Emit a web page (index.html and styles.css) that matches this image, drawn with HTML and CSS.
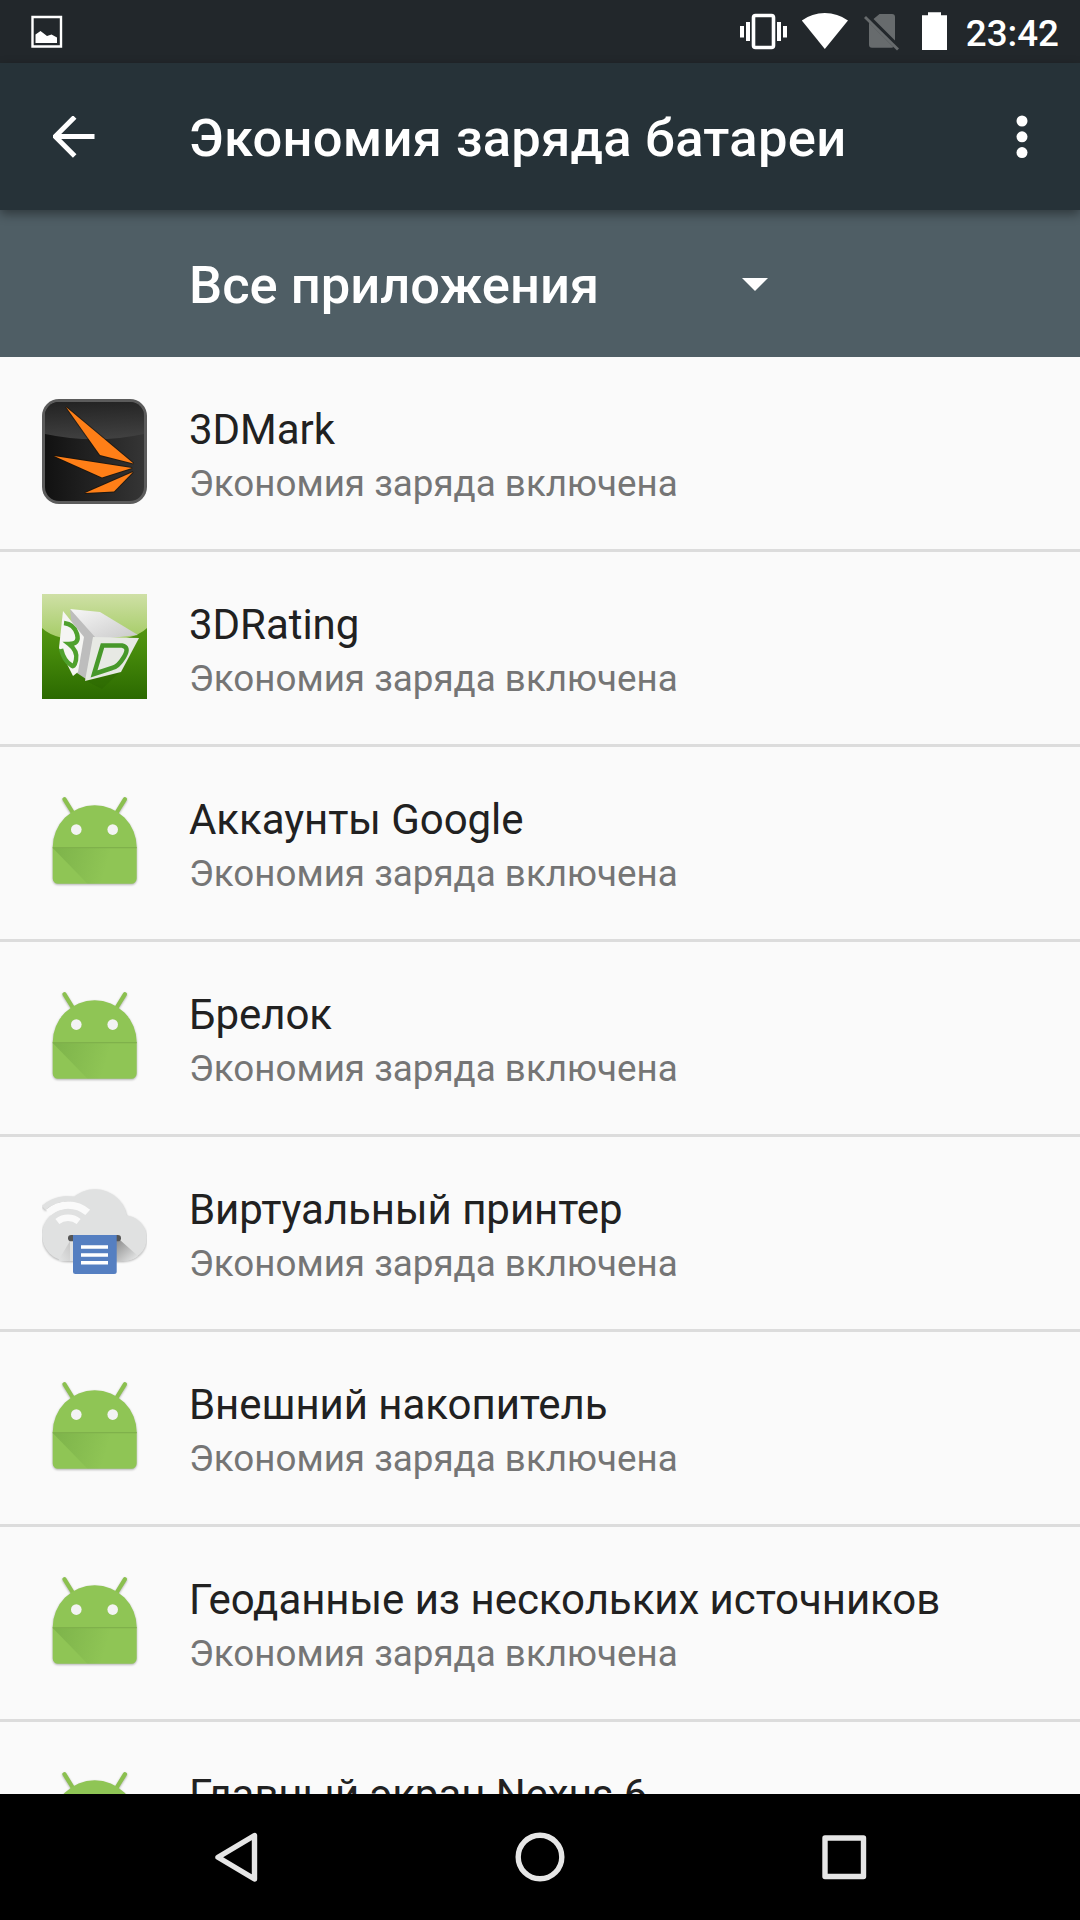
FILE: index.html
```html
<!DOCTYPE html>
<html lang="ru">
<head>
<meta charset="utf-8">
<title>Экономия заряда батареи</title>
<link rel="stylesheet" href="styles.css">
</head>
<body>
<svg class="defs" aria-hidden="true">
  <defs>
    <linearGradient id="fold" gradientUnits="userSpaceOnUse" x1="10" y1="60" x2="65" y2="76">
      <stop offset="0" stop-color="#33691e" stop-opacity=".2"/>
      <stop offset="1" stop-color="#33691e" stop-opacity="0"/>
    </linearGradient>
    <symbol id="android" viewBox="0 0 105 105">
      <g class="lift">
        <path d="M22.4 10.2 31 24M83 10.2 74.4 24" fill="none" stroke="#8bc04f" stroke-width="4.2" stroke-linecap="round"/>
        <path d="M10.7 58.3a42 42 0 0 1 84 0V89.500a5.200 5.200 0 0 1-5.200 5.200h-73.600a5.200 5.200 0 0 1-5.200-5.200z" fill="#8fc555"/>
      </g>
      <path d="M10.700 59H94.700V89.500a5.200 5.200 0 0 1-5.200 5.200H45.500z" fill="url(#fold)"/>
      <path d="M10.700 58.600h84" stroke="#7fb14b" stroke-width="1.200"/>
      <circle cx="34.300" cy="40.600" r="5.300" fill="#f3f3f3"/>
      <circle cx="70.700" cy="40.600" r="5.300" fill="#f3f3f3"/>
    </symbol>
  </defs>
</svg>

<div class="screen">
  <header class="status">
    <svg class="picture" width="32" height="34" viewBox="0 0 32 34"><path d="M1.500 2h28.500v29.500H1.500z" fill="none" stroke="#fff" stroke-width="2.400"/><path d="M4.500 28V19.500L9.500 16 16 21 20.500 19.500 26 22.500V28z" fill="#fff"/></svg>
    <svg width="244" height="63" viewBox="720 0 244 63" class="indicators">
      <g fill="#fff">
        <path d="M740 26h4v11.500h-4zM746 22h4v19h-4zM777 22h4v19h-4zM783 26h4v11.500h-4z"/>
        <rect x="753.500" y="15.500" width="20" height="32" rx="2" fill="none" stroke="#fff" stroke-width="3.600"/>
        <path d="M824.800 49 801.800 20.500Q812 13 824.800 13T848 20.500z"/>
        <path d="M928 12.300h13v3h6V50h-25V15.300h6z"/>
      </g>
      <path d="M879.500 14H892a3 3 0 0 1 3 3V40.500L873.500 19zM869 22.500 893.500 47q-.7.800-2 .800H872a3 3 0 0 1-3-3z" fill="#676b6d"/>
      <path d="M865 17 898 49.500" stroke="#676b6d" stroke-width="2.800"/>
    </svg>
    <span class="clock">23:42</span>
  </header>

  <div class="appbar">
    <svg class="back" width="42" height="42" viewBox="0 0 42 42"><path d="M41.500 20.500H3.500M21.700 1 2.200 20.500l19.500 19.500" fill="none" stroke="#fff" stroke-width="5"/></svg>
    <h1 class="heading heading-title">Экономия заряда батареи</h1>
    <svg class="more" width="12" height="44" viewBox="0 0 12 44" fill="#fff"><circle cx="6" cy="6" r="5.500"/><circle cx="6" cy="21.800" r="5.500"/><circle cx="6" cy="37.600" r="5.500"/></svg>
  </div>

  <div class="filter">
    <span class="heading">Все приложения</span>
    <svg class="caret" width="26" height="14" viewBox="0 0 26 14"><path d="M0 1h26L13 14z" fill="#fff"/></svg>
  </div>

  <ul class="apps">
    <li class="app">
      <svg class="icon" viewBox="0 0 105 105">
        <defs>
          <linearGradient id="mk" x2="1"><stop stop-color="#111"/><stop offset="1" stop-color="#353535"/></linearGradient>
          <linearGradient id="gl" x2="0" y2="1"><stop stop-color="#242424"/><stop offset="1" stop-color="#444"/></linearGradient>
        </defs>
        <rect width="105" height="105" rx="17" fill="#5b5b5b"/>
        <rect x="3" y="3" width="99" height="99" rx="14" fill="url(#mk)"/>
        <path d="M3 35V17A14 14 0 0 1 17 3H88a14 14 0 0 1 14 14V35Q53 45.500 3 35z" fill="url(#gl)" opacity=".9"/>
        <g fill="#ff7f17" stroke="#1a1005" stroke-opacity=".6" stroke-width="2" paint-order="stroke">
          <path d="M24 8 91.500 64.500 58 56z"/><path d="M12 57 90 69 60 78.500z"/><path d="M91 73 72 92.500 43 94z"/>
        </g>
      </svg>
      <div class="text"><span class="name">3DMark</span><span class="state">Экономия заряда включена</span></div>
    </li>
    <li class="app">
      <svg class="icon" viewBox="0 0 105 105">
        <defs>
          <linearGradient id="gr" x2="0" y2="1"><stop stop-color="#69a51c"/><stop offset=".55" stop-color="#468a0b"/><stop offset="1" stop-color="#2b6900"/></linearGradient>
          <linearGradient id="sh" x2="0" y2="1"><stop stop-color="#cfe0a6"/><stop offset="1" stop-color="#a3cb63"/></linearGradient>
          <linearGradient id="tp" x2="1" y2="1"><stop stop-color="#f7f7f7"/><stop offset="1" stop-color="#c8c8c8"/></linearGradient>
        </defs>
        <path d="M0 0h105v105H0z" fill="url(#gr)"/>
        <path d="M0 0h105v34Q92 47 52.500 47T0 34z" fill="url(#sh)"/>
        <path d="M31 80 44 87 80 76 60 95z" fill="#245b00" opacity=".25"/>
        <path d="M28 15 58 18 96 41 50 46z" fill="url(#tp)"/>
        <path d="M28 15 53 43 44 85 35 79z" fill="#bdbdbd"/>
        <path d="M21 17 42 43 36 78 31 82 17 54z" fill="#f5f5f3"/>
        <path d="M51 43 97 44 79 78 43 87z" fill="#e7e9e4"/>
        <path d="M22 29Q32 30 35 40T27 50Q36 57 34 66T29 71Q22 67 19 55" fill="none" stroke="#4fa12d" stroke-width="4.500"/>
        <path d="M60.500 51.500 80 51.500Q88 53 82 63T70 74L52 80z" fill="none" stroke="#47982a" stroke-width="4.500"/>
      </svg>
      <div class="text"><span class="name">3DRating</span><span class="state">Экономия заряда включена</span></div>
    </li>
    <li class="app"><svg class="icon"><use href="#android"/></svg><div class="text"><span class="name">Аккаунты Google</span><span class="state">Экономия заряда включена</span></div></li>
    <li class="app"><svg class="icon"><use href="#android"/></svg><div class="text"><span class="name">Брелок</span><span class="state">Экономия заряда включена</span></div></li>
    <li class="app">
      <svg class="icon" viewBox="0 0 105 105">
        <defs>
          <linearGradient id="pshade" gradientUnits="userSpaceOnUse" x1="74" y1="60" x2="92" y2="80"><stop stop-color="#888"/><stop offset="1" stop-color="#e0e1e1"/></linearGradient>
          <linearGradient id="lshade" gradientUnits="userSpaceOnUse" x1="32" y1="66" x2="16" y2="76"><stop stop-color="#c4c4c4"/><stop offset="1" stop-color="#e0e1e1"/></linearGradient>
        </defs>
        <g class="lift" fill="#e0e1e1">
          <circle cx="26" cy="56" r="26"/><circle cx="53" cy="42.700" r="32.500"/><circle cx="82" cy="59" r="22.800"/><path d="M26 50h56v31.900H26z"/>
          <path d="M1.700 29A36.300 36.300 0 0 1 45 25.500" fill="none" stroke="#e0e1e1" stroke-width="5.400"/>
        </g>
        <path d="M28 62V82H16z" fill="url(#lshade)"/>
        <path d="M78 61 96 77Q90 82 82 82H72V61z" fill="url(#pshade)"/>
        <g fill="none" stroke="#fafafa"><path d="M6.300 33.400A30 30 0 0 1 45.700 33.400" stroke-width="7.200"/><path d="M15.400 42.400A17.200 17.200 0 0 1 36.600 42.400" stroke-width="6.400"/></g>
        <rect x="26" y="56" width="53" height="6.300" rx="3.100" fill="#555"/>
        <path d="M31 56h43.700v36.500a2.500 2.500 0 0 1-2.500 2.500H33.500a2.500 2.500 0 0 1-2.500-2.500z" fill="#557fc1"/>
        <path d="M39 68h27M39 76h27M39 83.800h27" stroke="#fff" stroke-width="3.500"/>
      </svg>
      <div class="text"><span class="name">Виртуальный принтер</span><span class="state">Экономия заряда включена</span></div>
    </li>
    <li class="app"><svg class="icon"><use href="#android"/></svg><div class="text"><span class="name">Внешний накопитель</span><span class="state">Экономия заряда включена</span></div></li>
    <li class="app"><svg class="icon"><use href="#android"/></svg><div class="text"><span class="name">Геоданные из нескольких источников</span><span class="state">Экономия заряда включена</span></div></li>
    <li class="app"><svg class="icon"><use href="#android"/></svg><div class="text"><span class="name">Главный экран Nexus 6</span></div></li>
  </ul>

  <nav class="navbar">
    <svg width="1080" height="126" viewBox="0 0 1080 126" fill="none" stroke="#e6e6e6" stroke-width="5.400" stroke-linejoin="round">
      <path d="M254.500 41.500V85L218 63.200z"/>
      <circle cx="540" cy="63" r="21.800"/>
      <rect x="825" y="44" width="38.500" height="38.500"/>
    </svg>
  </nav>
</div>
</body>
</html>
```
FILE: styles.css
```css
* { box-sizing: border-box; }

body {
  margin: 0;
  font-family: Roboto, "Noto Sans", sans-serif;
  background: #fafafa;
}

svg { display: block; flex: none; }
.defs { position: absolute; width: 0; height: 0; }

.screen {
  display: flex;
  flex-direction: column;
  width: 1080px;
  height: 1920px;
  overflow: hidden;
}

.status {
  display: flex;
  flex: none;
  height: 63px;
  padding: 0 21px 0 31px;
  background: #22272b;
  color: #fff;
}
.picture { margin-top: 15px; }
.indicators { margin-left: auto; }
.clock {
  width: 95px;
  font-size: 36.75px;
  font-weight: 500;
  line-height: 67px;
  text-align: right;
}

.appbar {
  z-index: 1;
  display: flex;
  flex: none;
  align-items: center;
  height: 147px;
  padding: 0 52px 0 53px;
  background: #263238;
  box-shadow: 0 4px 10px rgba(0, 0, 0, .4);
}
.back { margin-right: 94px; }
.more { margin-left: auto; }

.heading {
  margin: 0;
  padding-top: 3px;
  color: #fff;
  font-size: 52.5px;
  font-weight: 500;
  line-height: 62px;
  white-space: nowrap;
}
.heading-title { padding-top: 2px; letter-spacing: .3px; }

.filter {
  display: flex;
  flex: none;
  align-items: center;
  justify-content: space-between;
  height: 147px;
  padding: 0 312px 0 189px;
  background: #4f5e65;
}

.apps {
  flex: 1;
  min-height: 0;
  margin: 0;
  padding: 0;
  overflow: hidden;
  list-style: none;
}
.app {
  display: flex;
  gap: 42px;
  height: 195px;
  padding: 42px 42px 0;
  border-bottom: 3px solid #dcdcdc;
}
.icon { width: 105px; height: 105px; }
.lift { filter: drop-shadow(0 1px 1px rgba(0, 0, 0, .3)); }

.text {
  display: flex;
  flex-direction: column;
  gap: 7px;
  padding-top: 6px;
  white-space: nowrap;
}
.name { color: #212121; font-size: 42px; line-height: 50px; letter-spacing: -.05px; }
.state { color: #757575; font-size: 36.75px; line-height: 44px; }

.navbar { flex: none; height: 126px; background: #000; }
```
